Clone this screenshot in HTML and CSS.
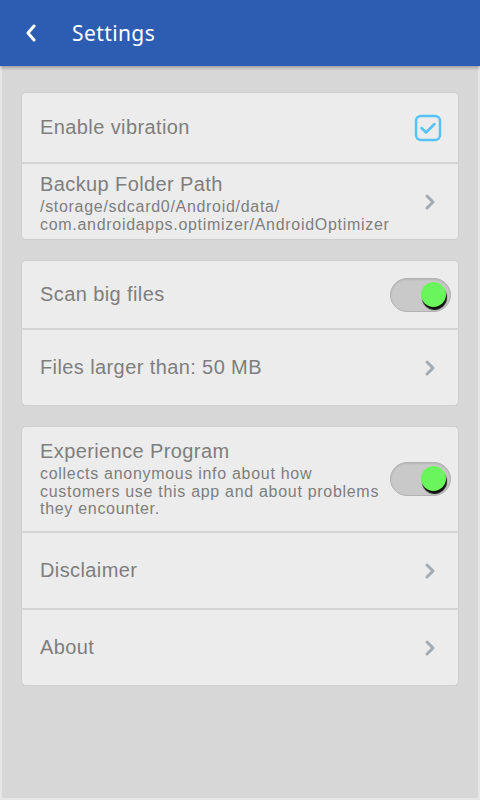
FILE: index.html
```html
<!DOCTYPE html>
<html lang="en">
<head>
<meta charset="UTF-8" />
<meta name="viewport" content="width=device-width, initial-scale=1.0">
<title>Settings</title>
<link rel="stylesheet" href="styles.css">
</head>
<body>
<div class="screen">
  <div class="header">
    <svg class="back" width="14" height="18" viewBox="0 0 14 18"><path d="M10 2 L4 9 L10 16" fill="none" stroke="#fff" stroke-width="3" stroke-linecap="round" stroke-linejoin="round"/></svg>
    <span class="title">Settings</span>
  </div>

  <div class="content">
    <div class="card">
      <div class="row r-short">
        <div class="text"><div class="label">Enable vibration</div></div>
        <svg class="check" width="28" height="28" viewBox="0 0 28 28"><rect x="2" y="2" width="24" height="24" rx="5" fill="none" stroke="#55c3f5" stroke-width="2.5"/><path d="M7.5 14 L12 18.5 L20.5 10" fill="none" stroke="#55c3f5" stroke-width="2.5" stroke-linecap="round" stroke-linejoin="round"/></svg>
      </div>
      <div class="row r-mid">
        <div class="text low">
          <div class="label">Backup Folder Path</div>
          <div class="sub">/storage/sdcard0/Android/data/<br>com.androidapps.optimizer/AndroidOptimizer</div>
        </div>
        <svg class="chev" width="12" height="18" viewBox="0 0 12 18"><path d="M3 3 L9 9 L3 15" fill="none" stroke="#a3abb3" stroke-width="3" stroke-linecap="round" stroke-linejoin="round"/></svg>
      </div>
    </div>

    <div class="card">
      <div class="row r-short2">
        <div class="text"><div class="label">Scan big files</div></div>
        <div class="toggle"><div class="knob"></div></div>
      </div>
      <div class="row r-mid">
        <div class="text"><div class="label">Files larger than: 50 MB</div></div>
        <svg class="chev" width="12" height="18" viewBox="0 0 12 18"><path d="M3 3 L9 9 L3 15" fill="none" stroke="#a3abb3" stroke-width="3" stroke-linecap="round" stroke-linejoin="round"/></svg>
      </div>
    </div>

    <div class="card">
      <div class="row r-tall">
        <div class="text">
          <div class="label">Experience Program</div>
          <div class="sub">collects anonymous info about how<br>customers use this app and about problems<br>they encounter.</div>
        </div>
        <div class="toggle"><div class="knob"></div></div>
      </div>
      <div class="row r-mid">
        <div class="text"><div class="label">Disclaimer</div></div>
        <svg class="chev" width="12" height="18" viewBox="0 0 12 18"><path d="M3 3 L9 9 L3 15" fill="none" stroke="#a3abb3" stroke-width="3" stroke-linecap="round" stroke-linejoin="round"/></svg>
      </div>
      <div class="row r-mid">
        <div class="text"><div class="label">About</div></div>
        <svg class="chev" width="12" height="18" viewBox="0 0 12 18"><path d="M3 3 L9 9 L3 15" fill="none" stroke="#a3abb3" stroke-width="3" stroke-linecap="round" stroke-linejoin="round"/></svg>
      </div>
    </div>
  </div>
</div>
</body>
</html>
```

FILE: styles.css
```css
html, body { margin:0; padding:0; }
body { width:480px; height:800px; overflow:hidden; background:#e6e6e6; font-family:'Liberation Sans', Arial, sans-serif; }
.screen { height:798px; margin:0 2px; background:#d7d7d7; display:flex; flex-direction:column; }
.header { height:66px; margin:0 -2px; background:#2d5db3; display:flex; align-items:center; box-shadow:0 2px 3px rgba(0,0,0,0.25); flex-shrink:0; }
.back { margin-left:24px; margin-right:34px; }
.title { color:#fff; font-family:'Noto Sans', sans-serif; font-size:21px; letter-spacing:0.4px; }
.content { padding:26px 19px 0 19px; display:flex; flex-direction:column; gap:20px; }
.card { background:#ececec; border:1px solid #cfcfcf; border-radius:5px; display:flex; flex-direction:column; }
.row { display:flex; align-items:center; padding:0 18px 0 18px; border-top:2px solid #d4d4d4; box-sizing:border-box; }
.row:first-child { border-top:none; }
.r-short { height:69px; }
.r-short2 { height:67px; }
.r-mid { height:77px; }
.r-tall { height:104px; }
.text { flex:1; color:#7e7e7e; }
.text.low { padding-top:3px; }
.label { font-size:20px; line-height:23px; letter-spacing:0.4px; }
.sub { font-size:16px; line-height:17.5px; letter-spacing:0.7px; margin-top:2px; }
.check { margin-right:-2px; }
.chev { margin-right:4px; }
.toggle { width:59px; height:32px; border-radius:17px; background:#c9c9c9; border:1px solid #b3b3b3; position:relative; margin-right:-11px; box-shadow:inset 0 1px 2px rgba(0,0,0,0.1); }
.knob { position:absolute; right:4px; top:3px; width:25px; height:25px; border-radius:50%; background:#6bf55c; box-shadow:1px 3px 1px #111; }
```
